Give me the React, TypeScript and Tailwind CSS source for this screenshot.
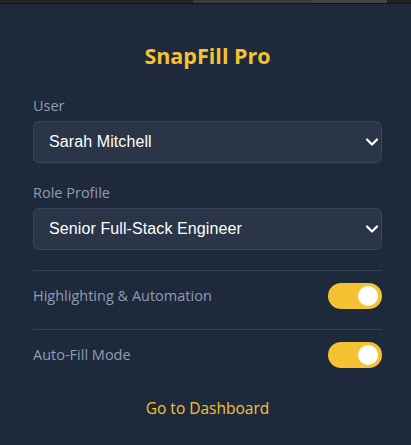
import { useState } from "react";

const sans = "font-['Open_Sans','Noto_Sans',sans-serif]";

function Chevron() {
  return (
    <svg
      className="pointer-events-none absolute right-[3px] top-1/2 -translate-y-1/2"
      width="14"
      height="14"
      viewBox="0 0 14 14"
      fill="none"
    >
      <path d="M2 4.5 L7 9.5 L12 4.5" stroke="white" strokeWidth="2.2" strokeLinecap="round" strokeLinejoin="round" />
    </svg>
  );
}

function Field({ label, value, options }: { label: string; value: string; options: string[] }) {
  return (
    <div>
      <label className={`block text-[14.5px] leading-5 text-[#8d9db5] mb-[5px] ${sans}`}>{label}</label>
      <div className="relative">
        <select
          defaultValue={value}
          className="block h-[42px] w-full appearance-none rounded-md border border-[#39455a] bg-[#2a3547] pl-[15px] pr-8 font-['Liberation_Sans',Arial,sans-serif] text-[16px] tracking-[0.1px] text-white outline-none"
        >
          {options.map((o) => (
            <option key={o}>{o}</option>
          ))}
        </select>
        <Chevron />
      </div>
    </div>
  );
}

function Toggle({ on, onChange }: { on: boolean; onChange: () => void }) {
  return (
    <button
      onClick={onChange}
      className={`flex h-[26px] w-[54px] items-center rounded-full px-[4px] ${on ? "justify-end bg-[#f4c232]" : "justify-start bg-[#475569]"}`}
    >
      <span className="h-[20px] w-[20px] rounded-full bg-white" />
    </button>
  );
}

export default function App() {
  const [highlight, setHighlight] = useState(true);
  const [autoFill, setAutoFill] = useState(true);

  return (
    <div className="min-h-screen w-[411px] bg-[#1e293b]">
      {/* browser chrome fragment */}
      <div className="flex h-[4px] border-b border-[#16161a]">
        <div className="w-[193px] bg-[#232325]" />
        <div className="w-[119px] bg-[#3b3b3e]" />
        <div className="w-[75px] bg-[#444447]" />
        <div className="flex-1 bg-[#1f1f21]" />
      </div>

      <div className="pl-[33px] pr-[29px] pt-[38px]">
        <h1 className={`text-center text-[21.5px] font-bold leading-7 text-[#f4c232] ${sans}`}>SnapFill Pro</h1>

        <div className="mt-[26px] flex flex-col gap-[20px]">
          <Field label="User" value="Sarah Mitchell" options={["Sarah Mitchell", "James Carter"]} />
          <Field
            label="Role Profile"
            value="Senior Full-Stack Engineer"
            options={["Senior Full-Stack Engineer", "Product Designer"]}
          />
        </div>

        <div className="mt-[20px] border-t border-[#334155]" />
        <div className="flex items-center justify-between pt-[12px] pb-[20px]">
          <span className={`text-[14.5px] text-[#8d9db5] ${sans}`}>Highlighting &amp; Automation</span>
          <Toggle on={highlight} onChange={() => setHighlight(!highlight)} />
        </div>

        <div className="border-t border-[#334155]" />
        <div className="flex items-center justify-between pt-[12px]">
          <span className={`text-[14.5px] text-[#8d9db5] ${sans}`}>Auto-Fill Mode</span>
          <Toggle on={autoFill} onChange={() => setAutoFill(!autoFill)} />
        </div>

        <div className="mt-[28px] text-center">
          <a href="#" className={`text-[15.5px] leading-6 text-[#f4c232] ${sans}`}>
            Go to Dashboard
          </a>
        </div>
      </div>
    </div>
  );
}
